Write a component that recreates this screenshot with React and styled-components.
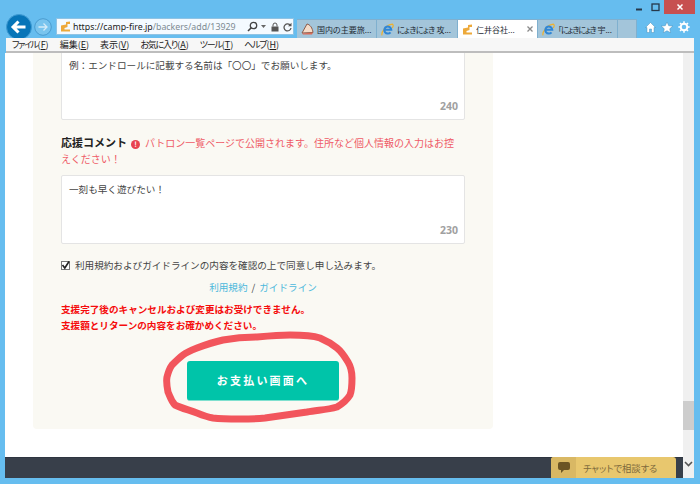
import React from 'react';
import styled, { createGlobalStyle } from 'styled-components';

const GlobalStyle = createGlobalStyle`
  html, body { margin: 0; padding: 0; background: #66bdef; }
  * { box-sizing: border-box; }
`;

const UI_FONT = `"Noto Sans CJK JP", "Liberation Sans", sans-serif`;

const Window = styled.div`
  position: relative;
  width: 700px;
  height: 484px;
  background: #66bdef;
  font-family: ${UI_FONT};
  display: flex;
  flex-direction: column;
  overflow: hidden;
`;

/* window chrome */
const TitleBar = styled.div`
  height: 15px;
  display: flex;
  justify-content: flex-end;
  align-items: flex-start;
  padding-right: 5px;
`;

const WinButton = styled.div`
  width: ${p => p.$w}px;
  height: 14px;
  display: flex;
  align-items: center;
  justify-content: center;
  background: ${p => (p.$close ? '#c75050' : 'transparent')};
`;

const Toolbar = styled.div`
  height: 23px;
  display: flex;
  align-items: flex-end;
  padding-left: 6px;
`;

const NavButtons = styled.div`
  width: 50px;
  height: 26px;
  margin-bottom: -2px;
  display: flex;
  align-items: center;
  gap: 2px;
`;

const AddressBar = styled.div`
  width: 238px;
  height: 17px;
  margin-bottom: 3px;
  background: #f4faff;
  border: 1px solid #8fc3e4;
  display: flex;
  align-items: center;
  padding: 0 1px 0 3px;
  gap: 3px;
  font-family: "Noto Sans", sans-serif;
  font-size: 8.8px;
  color: #7d8a92;
`;

const UrlText = styled.span`
  flex: 1;
  margin-left: -1px;
  white-space: nowrap;
  b { font-weight: 400; color: #222; }
`;

const Tabs = styled.div`
  display: flex;
  margin-left: 3px;
  height: 19px;
`;

const Tab = styled.div`
  width: ${p => p.$w || 80}px;
  display: flex;
  align-items: center;
  gap: 3px;
  padding: 0 3px 0 4px;
  background: ${p => (p.$active ? '#ffffff' : '#a3c5da')};
  border: 1px solid #7fb0cf;
  border-width: 1px 1px 0 0;
  font-size: 8px;
  font-feature-settings: "palt";
  color: #1e2a33;
  white-space: nowrap;
  overflow: hidden;
`;

const TabLabel = styled.span`
  flex: 1;
  min-width: 0;
  overflow: hidden;
`;

const Narrow = styled.span`
  letter-spacing: ${p => p.$s}px;
`;

const ToolIcons = styled.div`
  margin-left: 8px;
  margin-bottom: 5px;
  display: flex;
  gap: 5px;
  align-items: center;
`;

const MenuBar = styled.div`
  height: 15px;
  margin: 0 6px 0 6px;
  background: #f7f7f7;
  border-bottom: 2px solid #bdbdbd;
  display: flex;
  align-items: center;
  gap: 11px;
  padding: 0 0 1px 6px;
  font-size: 9px;
  font-feature-settings: "palt";
  color: #222;
  white-space: nowrap;
  u { text-underline-offset: 1px; }
`;

/* page */
const Body = styled.div`
  flex: 1;
  min-height: 0;
  margin: 0 6px 0 5px;
  display: flex;
  background: #fff;
`;

const Viewport = styled.div`
  position: relative;
  flex: 1;
  min-width: 0;
  display: flex;
  flex-direction: column;
  overflow: hidden;
`;

const PageArea = styled.div`
  flex: 1;
  min-height: 0;
  padding: 0 0 0 28px;
`;

const Card = styled.div`
  position: relative;
  width: 460px;
  height: 376px;
  padding: 0 28px;
  background: #faf9f3;
  border-radius: 0 0 4px 4px;
  display: flex;
  flex-direction: column;
`;

const TextBox = styled.div`
  position: relative;
  height: 69px;
  flex: none;
  margin-top: ${p => p.$mt || 0}px;
  padding: 6px 7px;
  background: #fff;
  border: 1px solid #e4e4e4;
  border-radius: 2px;
  font-size: 9.6px;
  line-height: 14px;
  color: #444;
`;

const Counter = styled.span`
  position: absolute;
  right: 6px;
  bottom: 7px;
  font-family: "Noto Sans", sans-serif;
  font-size: 10.5px;
  line-height: 12px;
  font-weight: 700;
  color: #a0a0a0;
`;

const Note = styled.div`
  margin-top: 14px;
  width: 402px;
  font-size: 10px;
  line-height: 16px;
  color: #ef5b67;
`;

const NoteLabel = styled.b`
  font-size: 11px;
  color: #222;
  margin-right: 4px;
`;

const NoteIcon = styled.span`
  display: inline-flex;
  align-items: center;
  justify-content: center;
  width: 9px;
  height: 9px;
  margin-right: 5px;
  border-radius: 50%;
  background: #e8434f;
  color: #fff;
  font-size: 7px;
  font-weight: 700;
  line-height: 9px;
`;

const CheckRow = styled.label`
  margin-top: 14px;
  display: flex;
  align-items: center;
  gap: 5px;
  font-size: 9.6px;
  line-height: 14px;
  color: #444;
`;

const CheckBox = styled.span`
  width: 9px;
  height: 9px;
  flex: none;
  background: #fff;
  border: 1px solid #777;
  display: flex;
  align-items: center;
  justify-content: center;
`;

const Links = styled.div`
  margin-top: 8px;
  text-align: center;
  font-size: 9.6px;
  line-height: 14px;
  color: #444;
  a { color: #4cb8dc; text-decoration: none; }
`;

const Slash = styled.span`
  margin: 0 4px;
`;

const Warning = styled.div`
  margin-top: 7px;
  font-size: 9.6px;
  line-height: 16px;
  font-weight: 700;
  color: #f50c0c;
`;

const PayButton = styled.button`
  align-self: center;
  width: 152px;
  height: 40px;
  margin-top: 28px;
  padding: 0 0 2px;
  border: 0;
  border-bottom: 1px solid #7fe0cf;
  border-radius: 3px;
  background: #00c4a9;
  color: #fff;
  font-family: ${UI_FONT};
  font-size: 11px;
  font-weight: 700;
  letter-spacing: 2.2px;
`;

const Scribble = styled.svg`
  position: absolute;
  left: 0;
  top: 0;
  width: 460px;
  height: 376px;
  pointer-events: none;
`;

const Footer = styled.div`
  height: 21px;
  flex: none;
  background: #383f4a;
  border-top: 1px solid #2e3540;
`;

const ChatWidget = styled.div`
  position: absolute;
  right: 7px;
  bottom: 0;
  width: 125px;
  height: 21px;
  display: flex;
  border-radius: 3px 3px 0 0;
  overflow: hidden;
  background: #e8c76e;
  color: #7d6a3c;
  font-size: 9.3px;
  font-feature-settings: "palt";
`;

const ChatIcon = styled.div`
  width: 25px;
  display: flex;
  align-items: center;
  justify-content: center;
  background: #d9b864;
`;

const ChatText = styled.div`
  flex: 1;
  display: flex;
  align-items: center;
  padding-left: 7px;
`;

const Scrollbar = styled.div`
  width: 11px;
  flex: none;
  background: #f0f0f0;
  display: flex;
  flex-direction: column;
  justify-content: flex-end;
  align-items: center;
`;

const Thumb = styled.div`
  width: 100%;
  height: 29px;
  margin-bottom: 31px;
  background: #cdcdcd;
`;

const Arrow = styled.svg`
  margin-bottom: 11px;
`;

const StrokeIcon = styled.svg`
  display: block;
  flex: none;
  margin-left: ${p => p.$ml || 0}px;
`;

const BottomEdge = styled.div`
  height: 6px;
  flex: none;
`;

/* icons */
const CampIcon = () => (
  <StrokeIcon width="11" height="11" viewBox="0 0 11 11">
    <path d="M1 10.5V4.5L6 3.5V1L10 .5V3H7.5V6L4.5 7V8.5H10V10.5Z" fill="#eda93a" />
  </StrokeIcon>
);

const IeIcon = () => (
  <StrokeIcon width="13" height="13" viewBox="0 0 13 13">
    <path d="M1 12.3C.2 9 4.5 2 11.5 1.2C12.8 2 12 4 11 5" fill="none" stroke="#efb22e" strokeWidth="1.2" />
    <path d="M3.7 6.8H10.3A3.5 3.5 0 1 0 9.5 9.3" fill="none" stroke="#2f86d6" strokeWidth="2" />
  </StrokeIcon>
);

const FanIcon = () => (
  <StrokeIcon width="13" height="12" viewBox="0 0 13 12">
    <path d="M1 10L6 1C9 1.5 11.5 5 12 9.5Z" fill="#f6dcc8" stroke="#8a5a4a" strokeWidth="1" />
    <path d="M1 10.5L12 9.5 11 11.5H2Z" fill="#d96a55" />
  </StrokeIcon>
);

export default function App() {
  return (
    <Window>
      <GlobalStyle />
      <TitleBar>
        <WinButton $w={17}>
          <StrokeIcon width="8" height="8" viewBox="0 0 8 8">
            <path d="M1 6.5H7" stroke="#26384a" strokeWidth="2" />
          </StrokeIcon>
        </WinButton>
        <WinButton $w={17}>
          <StrokeIcon width="9" height="9" viewBox="0 0 9 9">
            <rect x="1" y="1" width="7" height="6.5" fill="none" stroke="#26384a" strokeWidth="1.3" />
          </StrokeIcon>
        </WinButton>
        <WinButton $w={31} $close>
          <StrokeIcon width="8" height="8" viewBox="0 0 8 8">
            <path d="M1.5 1.5L6.5 6.5M6.5 1.5L1.5 6.5" stroke="#fff" strokeWidth="1.5" />
          </StrokeIcon>
        </WinButton>
      </TitleBar>

      <Toolbar>
        <NavButtons>
          <StrokeIcon width="26" height="26" viewBox="0 0 26 26">
            <circle cx="13" cy="13" r="12.5" fill="#0775b8" stroke="#3f9ad2" />
            <path d="M19.5 13H7.5M12.5 7.5L7 13l5.5 5.5" fill="none" stroke="#fff" strokeWidth="3" />
          </StrokeIcon>
          <StrokeIcon width="18" height="18" viewBox="0 0 18 18">
            <circle cx="9" cy="9" r="8.3" fill="#78c4ee" stroke="#4a9bcf" />
            <path d="M4.5 9H12.5M9.5 5.5L13 9l-3.5 3.5" fill="none" stroke="#d4ebf8" strokeWidth="1.3" />
          </StrokeIcon>
        </NavButtons>
        <AddressBar>
          <CampIcon />
          <UrlText>
            <b>https://camp-fire.jp</b>/backers/add/13929
          </UrlText>
          <StrokeIcon width="11" height="11" viewBox="0 0 11 11">
            <circle cx="6.5" cy="4.5" r="3.2" fill="none" stroke="#444" strokeWidth="1.3" />
            <path d="M4 7L1 10" stroke="#444" strokeWidth="1.6" />
          </StrokeIcon>
          <StrokeIcon width="5" height="5" viewBox="0 0 5 5">
            <path d="M0 1H5L2.5 4Z" fill="#666" />
          </StrokeIcon>
          <StrokeIcon width="8" height="10" viewBox="0 0 8 10" $ml={2}>
            <path d="M2 4.5V3a2 2 0 0 1 4 0V4.5" fill="none" stroke="#555" />
            <rect x="0.5" y="4.5" width="7" height="5" fill="#555" />
          </StrokeIcon>
          <StrokeIcon width="9" height="10" viewBox="0 0 9 10" $ml={1}>
            <path d="M7.5 3.5A3.5 3.5 0 1 0 8 6" fill="none" stroke="#555" strokeWidth="1.3" />
            <path d="M8.5 .8V4.3H5Z" fill="#555" />
          </StrokeIcon>
        </AddressBar>
        <Tabs>
          <Tab><FanIcon /><TabLabel>国内の主要旅...</TabLabel></Tab>
          <Tab $w={81}><IeIcon /><TabLabel><Narrow $s={-0.5}>にょきにょき</Narrow> 攻...</TabLabel></Tab>
          <Tab $active>
            <CampIcon />
            <TabLabel>仁井谷社...</TabLabel>
            <StrokeIcon width="8" height="8" viewBox="0 0 8 8">
              <path d="M1.5 1.5L6.5 6.5M6.5 1.5L1.5 6.5" stroke="#8a8a8a" strokeWidth="1.3" />
            </StrokeIcon>
          </Tab>
          <Tab><IeIcon /><TabLabel><Narrow $s={-1}>「にょきにょき</Narrow> 宇...</TabLabel></Tab>
          <Tab $w={19} />
        </Tabs>
        <ToolIcons>
          <StrokeIcon width="11" height="11" viewBox="0 0 11 11">
            <path d="M5.5 .5L.5 5.5H2V10.5H4.5V7H6.5V10.5H9V5.5H10.5Z" fill="#fff" stroke="#3a7fa8" strokeWidth=".4" />
          </StrokeIcon>
          <StrokeIcon width="12" height="11" viewBox="0 0 12 11">
            <path d="M6 0L7.7 3.7 11.8 4.1 8.7 6.8 9.6 10.8 6 8.7 2.4 10.8 3.3 6.8 .2 4.1 4.3 3.7Z" fill="#fff" stroke="#3a7fa8" strokeWidth=".4" />
          </StrokeIcon>
          <StrokeIcon width="12" height="12" viewBox="0 0 12 12">
            <circle cx="6" cy="6" r="3.3" fill="none" stroke="#fff" strokeWidth="2" />
            <path d="M6 .3V2.5M6 9.5V11.7M.3 6H2.5M9.5 6H11.7M2 2L3.5 3.5M8.5 8.5L10 10M10 2L8.5 3.5M3.5 8.5L2 10" stroke="#fff" strokeWidth="1.5" />
          </StrokeIcon>
        </ToolIcons>
      </Toolbar>

      <MenuBar>
        <span><Narrow $s={-1.4}>ファイル</Narrow>(<u>F</u>)</span>
        <span>編集(<u>E</u>)</span>
        <span>表示(<u>V</u>)</span>
        <span><Narrow $s={-1.2}>お気に入り</Narrow>(<u>A</u>)</span>
        <span><Narrow $s={-1.2}>ツール</Narrow>(<u>T</u>)</span>
        <span><Narrow $s={-1.2}>ヘルプ</Narrow>(<u>H</u>)</span>
      </MenuBar>

      <Body>
        <Viewport>
          <PageArea>
            <Card>
              <TextBox $mt={-2}>
                例：エンドロールに記載する名前は「〇〇」でお願いします。
                <Counter>240</Counter>
              </TextBox>
              <Note>
                <NoteLabel>応援コメント</NoteLabel>
                <NoteIcon>!</NoteIcon>
                パトロン一覧ページで公開されます。住所など個人情報の入力はお控えください！
              </Note>
              <TextBox $mt={8}>
                一刻も早く遊びたい！
                <Counter>230</Counter>
              </TextBox>
              <CheckRow>
                <CheckBox>
                  <StrokeIcon width="9" height="9" viewBox="0 0 9 9">
                    <path d="M1.5 4L3.8 7 8 .5" fill="none" stroke="#222" strokeWidth="1.6" />
                  </StrokeIcon>
                </CheckBox>
                利用規約およびガイドラインの内容を確認の上で同意し申し込みます。
              </CheckRow>
              <Links>
                <a href="#terms">利用規約</a>
                <Slash>/</Slash>
                <a href="#guide">ガイドライン</a>
              </Links>
              <Warning>
                支援完了後のキャンセルおよび変更はお受けできません。
                <br />
                支援額とリターンの内容をお確かめください。
              </Warning>
              <PayButton>お支払い画面へ</PayButton>
              <Scribble viewBox="0 0 460 376">
                <path
                  d="M232 365C222 366 215 366 207 366C197 366 188 366 180 365C174 364 169 362 164 360C156 357 148 355 142 352C138 348 137 343 135 339C134 334 133 329 134 324C135 320 136 316 139 312C143 308 146 305 150 302C154 299 159 297 164 295C172 292 181 289 190 287C201 285 212 284 224 284C235 283 246 282 257 282C268 282 278 282 287 285C294 288 299 291 304 295C309 299 312 304 315 309C318 314 319 320 319 325C319 331 319 337 317 342C314 347 309 351 304 354C294 357 284 357 274 359C260 361 246 363 232 365Z"
                  fill="none"
                  stroke="#f2555c"
                  strokeWidth="7"
                  strokeLinejoin="round"
                />
              </Scribble>
            </Card>
          </PageArea>
          <Footer />
          <ChatWidget>
            <ChatIcon>
              <StrokeIcon width="12" height="11" viewBox="0 0 12 11">
                <path d="M2 0H10Q12 0 12 2V6Q12 8 10 8H6L3 11V8H2Q0 8 0 6V2Q0 0 2 0Z" fill="#6b5424" />
              </StrokeIcon>
            </ChatIcon>
            <ChatText>チャットで相談する</ChatText>
          </ChatWidget>
        </Viewport>
        <Scrollbar>
          <Thumb />
          <Arrow width="9" height="6" viewBox="0 0 9 6">
            <path d="M1 1L4.5 4.5 8 1" fill="none" stroke="#555" strokeWidth="1.6" />
          </Arrow>
        </Scrollbar>
      </Body>
      <BottomEdge />
    </Window>
  );
}
